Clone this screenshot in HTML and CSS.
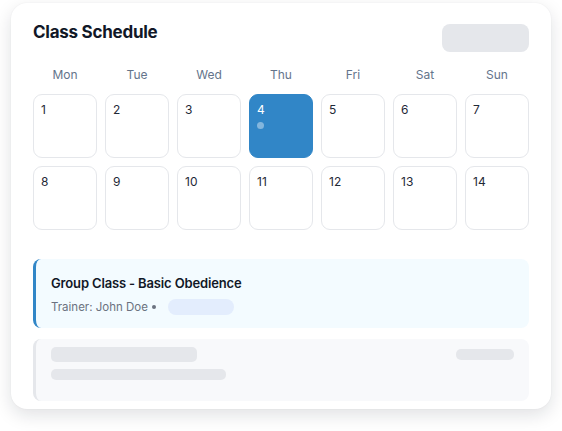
FILE: index.html
```html
<!DOCTYPE html>
<html lang="en">
<head>
<meta charset="utf-8">
<title>Class Schedule</title>
<link rel="stylesheet" href="styles.css">
</head>
<body>
<div class="card">
  <div class="header">
    <h1 class="title">Class Schedule</h1>
    <div class="btn-skel"></div>
  </div>
  <div class="days">
    <span>Mon</span><span>Tue</span><span>Wed</span><span>Thu</span><span>Fri</span><span>Sat</span><span>Sun</span>
  </div>
  <div class="grid">
    <div class="cell">1</div>
    <div class="cell">2</div>
    <div class="cell">3</div>
    <div class="cell active">4<span class="dot"></span></div>
    <div class="cell">5</div>
    <div class="cell">6</div>
    <div class="cell">7</div>
    <div class="cell">8</div>
    <div class="cell">9</div>
    <div class="cell">10</div>
    <div class="cell">11</div>
    <div class="cell">12</div>
    <div class="cell">13</div>
    <div class="cell">14</div>
  </div>
  <div class="event">
    <div class="event-title">Group Class - Basic Obedience</div>
    <div class="event-meta">
      <span>Trainer: John Doe</span>
      <span class="sep"></span>
      <span class="pill"></span>
    </div>
  </div>
  <div class="event skel">
    <div class="skel-left">
      <div class="bar bar1"></div>
      <div class="bar bar2"></div>
    </div>
    <div class="bar bar3"></div>
  </div>
</div>
</body>
</html>
```

FILE: styles.css
```css
* { box-sizing: border-box; }
html, body { margin: 0; background: #ffffff; }
body {
  font-family: Inter, "Noto Sans", "Liberation Sans", sans-serif;
  padding: 3px 11px 0 11px;
  width: 562px;
  height: 431px;
  overflow: hidden;
}
.card {
  width: 540px;
  height: 406px;
  background: #fff;
  border-radius: 16px;
  box-shadow: 0 6px 18px rgba(15, 23, 42, 0.13), 0 0 2px rgba(15, 23, 42, 0.05);
  padding: 17px 22px 8px 22px;
}
.header {
  display: flex;
  justify-content: space-between;
  align-items: flex-start;
  height: 46px;
}
.title {
  margin: 0;
  font-size: 17px;
  font-weight: 700;
  line-height: 24px;
  color: #111827;
  letter-spacing: -0.25px;
}
.btn-skel {
  width: 87px;
  height: 28px;
  margin-top: 4px;
  border-radius: 8px;
  background: #e5e7eb;
}
.days {
  display: grid;
  grid-template-columns: repeat(7, 64px);
  column-gap: 8px;
  height: 18px;
  line-height: 18px;
  font-size: 12px;
  color: #64748b;
  text-align: center;
  margin-bottom: 10px;
}
.grid {
  display: grid;
  grid-template-columns: repeat(7, 64px);
  grid-auto-rows: 64px;
  gap: 8px;
}
.cell {
  border: 1px solid #e5e7eb;
  border-radius: 9px;
  padding: 7px 7px;
  font-size: 12px;
  line-height: 16px;
  color: #1f2937;
  display: flex;
  flex-direction: column;
  align-items: flex-start;
}
.cell.active {
  background: #3186c7;
  border-color: #3186c7;
  color: #ffffff;
}
.dot {
  width: 7px;
  height: 7px;
  border-radius: 50%;
  background: rgba(255, 255, 255, 0.4);
  margin-top: 4px;
}
.event {
  margin-top: 29px;
  height: 69px;
  background: #f3fbff;
  border-left: 3px solid #3186c7;
  border-radius: 8px;
  padding: 14px 15px 0 15px;
}
.event-title {
  font-size: 13px;
  font-weight: 600;
  line-height: 20px;
  color: #111827;
  letter-spacing: -0.15px;
}
.event-meta {
  margin-top: 6px;
  display: flex;
  align-items: center;
  font-size: 11.5px;
  line-height: 16px;
  color: #6b7280;
}
.sep {
  width: 4px;
  height: 4px;
  border-radius: 50%;
  background: #6b7280;
  margin-left: 4px;
}
.pill {
  width: 66px;
  height: 16px;
  border-radius: 8px;
  background: #e3edfd;
  margin-left: 12px;
}
.event.skel {
  margin-top: 11px;
  height: 62px;
  background: #f8f9fb;
  border-left-color: #e5e7eb;
  padding: 8px 15px 0 15px;
  display: flex;
  justify-content: space-between;
  align-items: flex-start;
}
.bar { background: #e5e7eb; border-radius: 5px; }
.bar1 { width: 146px; height: 15px; }
.bar2 { width: 175px; height: 11px; margin-top: 7px; }
.bar3 { width: 58px; height: 11px; margin-top: 2px; }
```
